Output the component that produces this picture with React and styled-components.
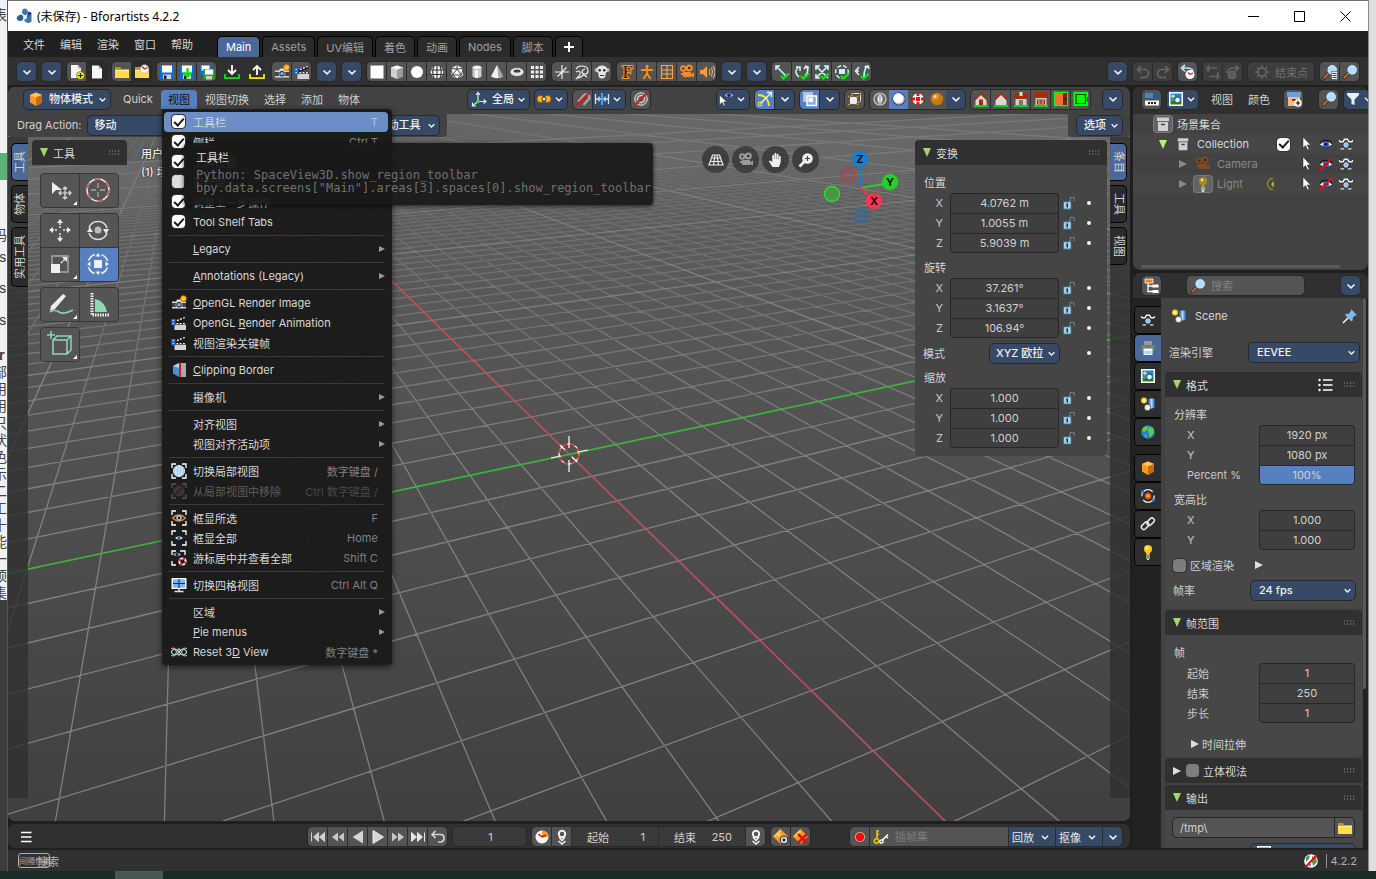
import React, { useState } from 'react'
import styled, { createGlobalStyle, css } from 'styled-components'

const GlobalStyle = createGlobalStyle`
    * {
        box-sizing: border-box;
    }
    body {
        margin: 0;
        background: #1b2b28;
        overflow: hidden;
    }
    body, button, input, select {
        font-family: Inter, "Noto Sans CJK SC", sans-serif;
        font-size: 11px;
        color: #d0d0d0;
    }
    button, input, select {
        margin: 0;
        padding: 0;
        border: 0;
        background: none;
        outline: none;
    }
    button {
        white-space: nowrap;
    }
    svg {
        display: block;
        flex: none;
    }
`

/* ---------- icons, all on a 16 unit grid ---------- */

const eye = (
    <>
        <path d="M1 8.5Q8 2 15 8.5Q8 13.5 1 8.5z" fill="#e8eefc" stroke="#16181f" strokeWidth=".8" />
        <circle cx="8" cy="8.2" r="3" fill="#3a5bd0" />
        <circle cx="8" cy="8.2" r="1.3" fill="#0c1330" />
        <path d="M2 6.5Q8 1.8 14 6.5" fill="none" stroke="#111" />
    </>
)

const corners = <path d="M1 5V1h4M11 1h4v4M15 11v4h-4M5 15H1v-4" fill="none" stroke="#fff" strokeWidth="1.3" />

const cube = (
    <>
        <path d="M8 1.5l6 2.5v7.5L8 15l-6-3.5V4z" fill="#f59a23" />
        <path d="M8 1.5L14 4 8 6.6 2 4z" fill="#ffc45a" />
        <path d="M14 4v7.5L8 15V6.6z" fill="#c86a0a" />
    </>
)

const check = <path d="M7 12l2.5 2.5L15 9.5" fill="none" stroke="#0ce60c" strokeWidth="2.2" />

const house = (door) => (
    <>
        <path d="M2.5 8.5L8 3.5l5.5 5V14h-11z" fill="#d9d9d9" />
        <path d="M8 1L1 8.2l1.3 1.2L8 4l5.7 5.4L15 8.2z" fill="#a32e08" />
        {door && <path d="M6 14V8.5h4V14z" fill="#a32e08" />}
        <path d="M1 15h14" stroke="#0f0" strokeWidth="1.4" />
    </>
)

const lens = (
    <>
        <path d="M6.3 9.7L2.2 13.8" stroke="#3a2418" strokeWidth="3.6" strokeLinecap="round" />
        <path d="M6.5 9.5L2.4 13.6" stroke="#a8694a" strokeWidth="2.2" strokeLinecap="round" />
        <circle cx="10.2" cy="5.8" r="4.4" fill="#b4dcff" stroke="#e8f4ff" strokeWidth="1" />
        <circle cx="10.2" cy="5.8" r="5.1" fill="none" stroke="#4a6c86" strokeWidth=".6" />
    </>
)

const camera = (
    <>
        <path d="M1 6.5h4l1-2h4l1 2h4v7H1z" fill="#d6d6d6" />
        <path d="M1 8h14v4H1z" fill="#444" />
        <circle cx="8" cy="9.8" r="3.4" fill="#d6d6d6" />
        <circle cx="8" cy="9.8" r="2.7" fill="#222" />
        <circle cx="8" cy="9.8" r="1.8" fill="#7db7e8" />
    </>
)

const clapper = (
    <>
        <path d="M3.5 9.5H15V15H3.500z" fill="#d4d4d4" />
        <path d="M4 6l10.500-4.200v2.600L6 7.800h9v1.700H3.500z" fill="#1c1c1c" />
        <path d="M6 5.600l1.800-.7M9 4.400l1.800-.7M12.200 3.100l1.600-.6M5.500 8.600h1.800M8.700 8.600h1.800M12 8.600h1.800" stroke="#fff" strokeWidth="1.300" />
        <path d="M.5 4h4v6.500h-4z" fill="#1a6ee0" />
        <path d="M1.500 5.500h1.500M1.500 8.500h1.500" stroke="#cfe3ff" />
    </>
)

const movieCam = (c) => (
    <>
        <circle cx="4.3" cy="4.5" r="3.2" fill={c} />
        <circle cx="10.3" cy="4" r="3.5" fill={c} />
        <circle cx="4.3" cy="4.5" r="1.1" fill="#2d2018" />
        <circle cx="10.3" cy="4" r="1.2" fill="#2d2018" />
        <path d="M4 8h8v5H4zM12 10l3-1.5v5L12 12zM2 9h2v2H2z" fill={c} />
    </>
)

const disk = (
    <>
        <path d="M1 1h14v14H1z" fill="#0a6fd8" />
        <path d="M3 1.5h10v7H3z" fill="#fff" />
        <path d="M4 10.5h8V15H4z" fill="#d0d0d0" />
        <path d="M5 11.5h2.4V15H5z" fill="#222" />
    </>
)

const folder = (
    <>
        <path d="M1 3h5l1.5 2H15v9H1z" fill="#c79410" />
        <path d="M1 6h14v8H1z" fill="#ffdc4a" />
        <path d="M1 6.4h14" stroke="#fff2a8" />
    </>
)

const render = (
    <>
        <path d="M1.500 5.800h3.500l1.500-2.600h3l1.500 2.600h3.500" fill="none" stroke="#f0f0f0" strokeWidth="1.500" />
        <path d="M1.500 4v1.500M14.500 4v1.500" stroke="#f0f0f0" strokeWidth="1.200" />
        <path d="M4.500 7h7v4.500h-7z" fill="#2a2a2a" />
        <circle cx="8" cy="9" r="2.300" fill="#8cc0ec" stroke="#dfefff" strokeWidth=".7" />
        <path d="M2.500 12.800h3.500M10 12.800h3.500" stroke="#e0e0e0" strokeWidth="1.200" />
    </>
)

const scene = (
    <>
        <path d="M8.5 3l3-1 3 1v8.500l-3 1.500-3-1.500z" fill="#4b8fe0" />
        <path d="M10.500 3h2v9h-2z" fill="#b5d8ff" />
        <circle cx="4" cy="4.500" r="3" fill="#ffd21f" />
        <circle cx="4" cy="4.500" r="1.200" fill="#fff" />
        <circle cx="7.500" cy="11.500" r="3.200" fill="#f0f0f0" stroke="#222" strokeWidth=".6" />
    </>
)

const picture = (
    <>
        <path d="M1 1h14v14H1z" fill="#fff" />
        <path d="M2.500 2.500h11v7h-11z" fill="#1685e8" />
        <path d="M2.500 9.500h11v4h-11z" fill="#22841f" />
        <path d="M3 5.200h4M5 3.200v4" stroke="#ffe14d" strokeWidth="1.300" />
        <circle cx="9.500" cy="9" r="2.800" fill="#f2f2f2" stroke="#111" strokeWidth=".6" />
    </>
)

const bulb = (c) => (
    <>
        <circle cx="8" cy="5" r="4" fill={c} />
        <path d="M6 8h4l-.5 3h-3z" fill={c} />
        <circle cx="7" cy="4" r="1.200" fill="#fff7b8" />
        <path d="M6 12h4M6 14h4M7 15.500h2" stroke="#e8eefc" strokeWidth="1.200" />
    </>
)

const glyphs = {
    down: <path d="M4.500 6.500L8 9.900l3.500-3.400" fill="none" stroke="#f0f0f0" strokeWidth="1.700" />,
    newFile: <><path d="M2 1h7l3 3.500V14H2z" fill="#f4f4f4" /><path d="M9 1v3.500h3" fill="#aaa" /><circle cx="11.500" cy="11.500" r="4" fill="#ecea1b" stroke="#333" strokeWidth=".5" /><path d="M11.500 9v5M9 11.500h5" stroke="#222" strokeWidth="1.200" /></>,
    doc: <><path d="M3 1.500h6.500L13 5v9.500H3z" fill="#f8f8f8" /><path d="M9.500 1.500V5H13" fill="#bbb" /></>,
    folder,
    recent: <>{folder}<circle cx="10.500" cy="5" r="4.300" fill="#fff" stroke="#999" strokeWidth=".6" /><path d="M10.500 5L8 2.500M10.500 5l3-1.500" stroke="#d11" strokeWidth="1.300" /></>,
    disk,
    diskIn: <>{disk}<path d="M8.500 4v8M4.500 8.500l4 4 4-4" fill="none" stroke="#16dc16" strokeWidth="2.400" /></>,
    diskCopy: <><path d="M1 1h11v10H1z" fill="#0a6fd8" /><path d="M2.500 1.500h8v5h-8z" fill="#fff" /><path d="M4.500 5h11v10.500h-11z" fill="#25a825" /><path d="M6 5.500h8v5H6z" fill="#fff" /><path d="M7 12h6v3.500H7z" fill="#ccc" /></>,
    importIcon: <><path d="M8 1v8M4 6l4 4 4-4" fill="none" stroke="#fff" strokeWidth="1.800" /><path d="M1 10v4.200h14V10" fill="none" stroke="#16e016" strokeWidth="1.800" /></>,
    exportIcon: <><path d="M8 11V2.500M4 6l4-4 4 4" fill="none" stroke="#fff" strokeWidth="1.800" /><path d="M1 10v4.200h14V10" fill="none" stroke="#f2ea10" strokeWidth="1.800" /></>,
    shot: <>{camera}<circle cx="12.500" cy="3.500" r="2.800" fill="#ffc21a" stroke="#f07a10" strokeWidth=".8" /></>,
    clapper,
    plane: <path d="M1.500 1.500h13v13h-13z" fill="#fff" />,
    cube: <><path d="M8 1.500l6 2v9L8 15l-6-2.500v-9z" fill="#cfcfcf" /><path d="M8 1.500l6 2-6 2.200-6-2.200z" fill="#f4f4f4" /><path d="M14 3.500v9L8 15V5.700z" fill="#9a9a9a" /></>,
    circle: <circle cx="8" cy="8" r="6" fill="#fff" />,
    sphere: <><circle cx="8" cy="8" r="6.300" fill="#f4f4f4" /><path d="M1 6h14M1 10.500h14M8 1v14M5 2q-2.500 6 0 12M11 2q2.500 6 0 12" fill="none" stroke="#333" strokeWidth="1.100" /></>,
    ico: <><path d="M8 1l6 3.500v7L8 15l-6-3.500v-7z" fill="#f4f4f4" /><path d="M8 1v4L3.500 11h9L8 5M2 4.500L8 5l6-.5M2 11.500h1.500L2 5M14 5l-1.500 6M3.500 11L8 15l4.500-4" fill="none" stroke="#333" strokeWidth=".9" /></>,
    cylinder: <><path d="M3.500 3.500v9q4.500 3 9 0v-9z" fill="#ccc" /><path d="M6 5h3v9H6z" fill="#f2f2f2" /><ellipse cx="8" cy="3.500" rx="4.500" ry="2" fill="#fff" stroke="#888" strokeWidth=".6" /></>,
    cone: <><path d="M8 1L2 12.500q6 3.500 12 0z" fill="#f4f4f4" /><path d="M8 1l1.500 13q3-.3 4.500-1.500z" fill="#a8a8a8" /></>,
    torus: <><ellipse cx="8" cy="8" rx="7" ry="4.500" fill="#e4e4e4" stroke="#333" strokeWidth=".6" /><ellipse cx="8" cy="7" rx="3.500" ry="1.600" fill="#3d3d3d" /></>,
    grid: <path d="M2 2h3v3H2zM6.500 2h3v3h-3zM11 2h3v3h-3zM2 6.500h3v3H2zM6.500 6.500h3v3h-3zM11 6.500h3v3h-3zM2 11h3v3H2zM6.500 11h3v3h-3zM11 11h3v3h-3z" fill="#f0f0f0" />,
    empty: <path d="M8 1v14M1 8h14M3.500 12.500l9-9" stroke="#eee" strokeWidth="1.200" />,
    curve: <path d="M2 5q2-3 5-3t5 1 2 4-3 3-3-2 3-3M2 8q3-2 4 0t-2 5-1 1q3 0 5-2t5 1" fill="none" stroke="#eee" strokeWidth="1.200" />,
    monkey: <><circle cx="2.500" cy="6" r="2" fill="#bbb" /><circle cx="13.500" cy="6" r="2" fill="#bbb" /><path d="M8 1.500q6 0 5 6-1 1-1.500 2 .5 5-3.500 5t-3.500-5Q4 8.500 3 7.500 2 1.500 8 1.500z" fill="#e8e8e8" /><circle cx="5.700" cy="6.300" r="1.200" fill="#222" /><circle cx="10.300" cy="6.300" r="1.200" fill="#222" /><path d="M6 11.500h4" stroke="#333" /></>,
    fontF: <path d="M3 1.500h11V5h-1.500L12 3H8v4h3V5.500h1V10h-1V8.500H8V13h2v1.500H3V13h2V3H3z" fill="#3d1c06" stroke="#ff9a35" />,
    armature: <><circle cx="8" cy="2.500" r="1.700" fill="#ff8c1e" /><path d="M2 6h12M8 4v6M8 9.500L4.500 15M8 9.500l3.500 5.500" fill="none" stroke="#ff8c1e" strokeWidth="1.800" /></>,
    lattice: <path d="M2.500 1.500h11v13h-11zM8 1.500v13M2.500 6h11M2.500 10h11" fill="none" stroke="#ffa245" strokeWidth="1.200" />,
    movie: movieCam('#f08a30'),
    speaker: <><path d="M1 6h3l4-4v12l-4-4H1z" fill="#ff9a3d" /><path d="M10 5q2 3 0 6M12 3.500q3 4.500 0 9M14 2q4 6 0 12" fill="none" stroke="#e0b088" strokeWidth="1.100" /></>,
    applyMove: <><path d="M2 2l10 10M2 6V2h4" fill="none" stroke="#c9f7f7" strokeWidth="1.600" />{check}</>,
    applyRot: <><path d="M5 13Q-1 8 4.500 3M11 12q5-5 1-10M2 3h4v4M10 5l2-3 3 2" fill="none" stroke="#c9f7f7" strokeWidth="1.600" />{check}</>,
    applyScale: <><path d="M2 2l12 12M14 2L2 14M2 6V2h4M10 2h4v4M2 10v4h4" fill="none" stroke="#c9f7f7" strokeWidth="1.600" />{check}</>,
    applyAll: <><circle cx="8" cy="8" r="6.300" fill="none" stroke="#c9f7f7" strokeWidth="1.400" strokeDasharray="4 2" /><path d="M5 5h6v5H5z" fill="#c9f7f7" />{check}</>,
    applyDelta: <><path d="M5 3L1.500 7 5 11M1.500 7H5M14 2q-4 2-4 11M10.500 3L14 2l1 3" fill="none" stroke="#c9f7f7" strokeWidth="1.600" />{check}</>,
    undo: <path d="M6 2L2.500 5.500 6 9M3 5.500h6.500a4 4 0 010 8H5" fill="none" stroke="#666" strokeWidth="1.700" />,
    redo: <path d="M10 2l3.500 3.500L10 9M13 5.500H6.500a4 4 0 000 8H11" fill="none" stroke="#666" strokeWidth="1.700" />,
    history: <><path d="M5 1L1.500 4 5 7.500M2 4h5q5 0 6 3" fill="none" stroke="#bfe2ff" strokeWidth="1.700" /><circle cx="10" cy="10.500" r="4.500" fill="#fff" /><path d="M10 10.500L8 8.500M10 10.500l3-1.500" stroke="#d11" strokeWidth="1.200" /></>,
    repeat: <path d="M3 8V4h9M4.500 1.500L2 4l2.500 2.500M13 8v4.500H4M11.500 10l2.500 2.500-2.500 2.500" fill="none" stroke="#636363" strokeWidth="1.600" />,
    repeatHist: <><path d="M10 1l3.500 3L10 7.500M13 4H8Q3 4 2 9" fill="none" stroke="#666" strokeWidth="1.600" /><circle cx="7" cy="11" r="4" fill="#5c5c5c" stroke="#6c6c6c" /></>,
    gear: <><circle cx="8" cy="8" r="4" fill="none" stroke="#666" strokeWidth="1.600" /><path d="M8 1v3M8 12v3M1 8h3M12 8h3M3 3l2 2M11 11l2 2M13 3l-2 2M5 11l-2 2" stroke="#666" strokeWidth="1.500" /></>,
    search: lens,
    searchDoc: <>{lens}<path d="M9.500 7.500h6v8h-6z" fill="#eee" stroke="#333" strokeWidth=".5" /><path d="M10.500 9.500h4M10.500 11.500h4M10.500 13.500h4" stroke="#444" /></>,
    objectMode: cube,
    axes: <><path d="M7 10.500V2M7 10.500h8M7 10.500L2 14.500M5 4l2-2.500L9 4M12.500 8.500l2.500 2-2.500 2M1.500 11.500v3.500H5" fill="none" stroke="#e8e8e8" strokeWidth="1.200" /><circle cx="7" cy="10.500" r="1.800" fill="#2ee52e" /></>,
    pivot: <><circle cx="4.500" cy="8" r="3.500" fill="#ffb01f" stroke="#7a4c00" strokeWidth=".6" /><circle cx="11.500" cy="8" r="3.500" fill="#ffb01f" stroke="#7a4c00" strokeWidth=".6" /><circle cx="8" cy="8" r="2" fill="#fff" stroke="#222" /></>,
    magnet: <><path d="M3 11L8.500 4.500q3-2.500 5 0t-.5 4.500L8.500 14" fill="none" stroke="#a4a4a4" strokeWidth="2.400" /><path d="M2 14L14 2" stroke="#e01010" strokeWidth="1.800" /></>,
    snap: <><path d="M1.500 3v10M14.500 3v10M2 8h12M5 5.500v5M11 5.500v5" stroke="#cfe2f6" strokeWidth="1.300" /><path d="M8 2v12" stroke="#39a0ff" strokeWidth="2.200" /></>,
    prop: <><circle cx="8" cy="8" r="6.300" fill="#777" stroke="#ddd" /><circle cx="8" cy="8" r="3.500" fill="#666" stroke="#eee" /><path d="M2.500 13.500L13.500 2.500" stroke="#e01010" strokeWidth="1.800" /></>,
    selectable: <><path d="M1.500 4v10l2.500-2.500 1.800 3.500 1.500-.8L5.600 11H9z" fill="#f4f4f4" stroke="#222" strokeWidth=".5" /><path d="M6.500 4.500Q11 0 15.500 4.500 11 8 6.500 4.500z" fill="#8ea6ff" /><circle cx="11" cy="4.300" r="1.700" fill="#17216b" /></>,
    gizmo: <><path d="M1 4q10 0 11 11" fill="none" stroke="#f2ea10" strokeWidth="1.900" /><path d="M3.500 12.500L14 2M10 1.500h4.500V6" fill="none" stroke="#e8f6ff" strokeWidth="1.300" /><circle cx="3" cy="13" r="1.800" fill="none" stroke="#f2ea10" strokeWidth="1.200" /></>,
    overlay: <><path d="M1 1h10v10H1z" fill="#b9c4d4" /><path d="M5 5h9.500v9.500H5z" fill="#8daee0" stroke="#fff" strokeWidth="1.400" /><path d="M6.500 6.500H11V11H6.500z" fill="#fff" /></>,
    xray: <><path d="M5 2.500h8.500V11H5z" fill="none" stroke="#ddd" /><path d="M2.500 5.500h8v8h-8z" fill="#ececec" stroke="#333" strokeWidth=".6" /><path d="M1 4.500h2v2H1zM9.500 4.500h2v2h-2zM1 12.500h2v2H1zM9.500 12.500h2v2h-2zM4 1.500h2v2H4zM12.500 1.500h2v2h-2zM12.500 10h2v2h-2z" fill="#e8b13a" stroke="#3a2a08" strokeWidth=".4" /></>,
    wire: <><circle cx="8" cy="8" r="6" fill="#666" stroke="#ccc" strokeWidth="1.200" /><path d="M8 2.500Q3.500 8 8 13.500Q12.500 8 8 2.500z" fill="#f0f0f0" stroke="#ddd" /><path d="M8 2v12" stroke="#777" strokeWidth=".8" /></>,
    solid: <><circle cx="8" cy="8" r="6.500" fill="#1c2a44" /><circle cx="8" cy="8" r="5.800" fill="#b9b9b9" /><circle cx="7.300" cy="7.300" r="5" fill="#fff" /></>,
    material: <><circle cx="8" cy="8" r="6" fill="#f4f4f4" stroke="#333" strokeWidth=".6" /><path d="M6.500 2h3v3h-3zM2 6.500h3v3H2zM11 6.500h3v3h-3zM6.500 11h3v3h-3zM6 6h4v4H6z" fill="#e01818" /></>,
    rendered: <><circle cx="8" cy="8" r="6.200" fill="#c67a10" /><circle cx="6.500" cy="6" r="3" fill="#e09a30" /><circle cx="6" cy="5.500" r="1.300" fill="#fbe0a0" /></>,
    house1: house(true),
    house2: house(false),
    house3: <><path d="M2.500 8h11v6h-11z" fill="#cfcfcf" /><path d="M1 2h14v6H1z" fill="#a32e08" /><path d="M6.500 1h3v4h-3z" fill="#ddd" /><path d="M6 9h4v5H6z" fill="#777" /><path d="M1 15h14" stroke="#0f0" strokeWidth="1.400" /></>,
    house4: <><path d="M2.500 7h11v7h-11z" fill="#cfcfcf" /><path d="M1 1h14v6H1z" fill="#a32e08" /><path d="M4.500 9h7v4h-7zM8 9v4M4.500 11h7" fill="none" stroke="#a32e08" strokeWidth="1.200" /><path d="M1 15h14" stroke="#0f0" strokeWidth="1.400" /></>,
    house5: <><path d="M1.500 1.500h13v13h-13z" fill="#ff6a35" stroke="#0f0" strokeWidth="1.300" /><path d="M10 2h4v12h-4z" fill="#7d2606" /><path d="M11.500 8H13" stroke="#111" strokeWidth="1.500" /></>,
    house6: <><path d="M.5 1h14.500v14H.5z" fill="#0f0" /><path d="M3 3.500h9.500v9H3z" fill="none" stroke="#0a3a0a" strokeWidth="1.200" /><path d="M14.300 6.500v4" stroke="#0a3a0a" /></>,
    toggles: <><path d="M1 2h14v5H1z" fill="#3b8ad6" /><path d="M9 2h6v5H9z" fill="#1b5fa8" /><path d="M1 9.500h14v5H1z" fill="#f4f4f4" /><path d="M4 12h2M7 12h2M10 12h2" stroke="#222" strokeWidth="2" /></>,
    picture,
    newColl: <><path d="M1 1h14v5H1z" fill="#6a9fd6" /><path d="M2 6h12v9H2z" fill="#f5b98a" /><path d="M6 8h4v2H6z" fill="#704020" /><circle cx="12" cy="12" r="3.800" fill="#fff" /><path d="M12 9.700v4.600M9.700 12h4.600" stroke="#111" strokeWidth="1.200" /></>,
    filter: <path d="M2 2h12v2L9.500 8.500V14l-3-1V8.500L2 4z" fill="#e6eefa" />,
    coll: <><path d="M2 1.500h12v3.500H2z" fill="#d0d0d0" /><path d="M3 6h10v9H3z" fill="#d0d0d0" /><path d="M6 8.500h4" stroke="#444" strokeWidth="1.600" /></>,
    camObj: movieCam('#7b4a26'),
    light: bulb('#a08e24'),
    pointer: <path d="M5 1v11l2.500-2.500L9.500 14l1.700-.8-2-4.200h3.300z" fill="#fff" stroke="#222" strokeWidth=".5" />,
    eye,
    eyeOff: <>{eye}<path d="M2 14L14 2" stroke="#e01010" strokeWidth="1.800" /></>,
    render,
    tree: <><path d="M1 1h8v4H1z" fill="#ff7a1a" stroke="#fff" strokeWidth=".8" /><path d="M4 5v8.500h5M4 8h5" fill="none" stroke="#fff" strokeWidth="1.300" /><path d="M8.500 6.500h6v3h-6zM8.500 12h6v3h-6z" fill="#fff" /></>,
    scene,
    pin: <><path d="M9 1l6 6-2 .5-2.500 2.500.5 2-1.500 1.500-6.500-6.500L4.500 5.500l2 .5L9 3z" fill="#7bb8f0" /><path d="M6 10L1 15" stroke="#fff" strokeWidth="1.500" /></>,
    printer: <><path d="M4 1h8v4H4z" fill="#9a9a9a" /><path d="M1 5h14v6H1z" fill="#777" /><path d="M11 6.500h2" stroke="#2fd32f" strokeWidth="1.500" /><path d="M3.500 8.500h9V15h-9z" fill="#eef5ff" /><path d="M4.500 11h7v3h-7z" fill="#a9d2ff" /></>,
    world: <><circle cx="8" cy="8" r="6.800" fill="#1b86d8" /><path d="M3 4q3-3 5-1.500L7 6l-3 2-2-1zM9 3l4 1 1 4-3 5-2-1V9L7.500 7zM4 10l3 2-1 2z" fill="#6ac83a" /></>,
    physics: <><circle cx="8" cy="8" r="6.300" fill="none" stroke="#e8e8e8" strokeWidth="1.300" strokeDasharray="15 4" /><circle cx="8" cy="8" r="3.200" fill="#e8590c" /><circle cx="8" cy="8" r="1.400" fill="#ffc04a" /><circle cx="2.500" cy="3.500" r="1.600" fill="#2a74ff" /><circle cx="13.500" cy="12.500" r="1.400" fill="#2a74ff" /></>,
    link: <g fill="none" stroke="#e8e8e8" strokeWidth="1.500"><rect x="1" y="7.500" width="8.500" height="4.800" rx="2.400" transform="rotate(-45 5 10)" /><rect x="6.500" y="3.500" width="8.500" height="4.800" rx="2.400" transform="rotate(-45 10.500 6)" /></g>,
    bulb: bulb('#ffc81e'),
    list: <><path d="M6 3h9.500M6 8h9.500M6 13h9.500" stroke="#fff" strokeWidth="1.400" /><circle cx="2.500" cy="3" r="1.200" fill="#fff" /><circle cx="2.500" cy="8" r="1.200" fill="#fff" /><circle cx="2.500" cy="13" r="1.200" fill="#fff" /></>,
    lock: <><path d="M1.500 6.500h9V15h-9z" fill="#a4d0e6" stroke="#2c5e78" strokeWidth="1" /><path d="M6 8.500v4.500M4.800 9.300H6" stroke="#16303f" strokeWidth="1.600" /><path d="M9 6.500V4Q9 1.500 11.500 1.500T14 4v1.500" fill="none" stroke="#7aa9c0" strokeWidth="1.200" strokeDasharray="2.500 1" /></>,
    clipping: <><path d="M8 1v14l-6-3.500V4z" fill="#4b8fcf" /><path d="M8 1v5L2 4z" fill="#a8d4ff" /><path d="M10 1h5v14h-5z" fill="#a8a8a8" /><path d="M9 1v14" stroke="#f01818" strokeWidth="1.800" /></>,
    local: <>{corners}<circle cx="8" cy="8" r="5.600" fill="#a4cdf2" stroke="#e8f4ff" strokeWidth=".8" /><path d="M8 2.500v11M5.500 4q-1.500 4 0 8M10.500 4q1.500 4 0 8" fill="none" stroke="#dff0ff" strokeWidth="1" /></>,
    localOff: <g opacity=".25">{corners}<circle cx="8" cy="8" r="5.600" fill="#8093a6" /><path d="M3 13L13 3" stroke="#e01010" strokeWidth="1.800" /></g>,
    frameSel: <>{corners}<path d="M1.500 8Q8 2 14.500 8 8 14 1.500 8z" fill="none" stroke="#f08a30" strokeWidth="1.300" /><circle cx="8" cy="8" r="2.800" fill="#9cc4e8" /><circle cx="8" cy="8" r="1.200" fill="#112" /></>,
    frameAll: <>{corners}<path d="M4 8q4-3.500 8 0-4 3-8 0z" fill="#cfe4ff" /><circle cx="8" cy="8" r="1.400" fill="#25539a" /></>,
    frameCur: <><path d="M1 5V1h4M9 1h5v4M1 11v4h4" fill="none" stroke="#fff" strokeWidth="1.300" /><path d="M2 4.500Q6 1 10 4.500 6 8 2 4.500z" fill="#9cc4e8" /><circle cx="6" cy="4.500" r="1.500" fill="#124" /><circle cx="11.500" cy="11.500" r="3.200" fill="none" stroke="#fff" strokeWidth="1.800" /><circle cx="11.500" cy="11.500" r="3.200" fill="none" stroke="#e01010" strokeWidth="1.800" strokeDasharray="2.500 2.500" /></>,
    quad: <><path d="M.5 1h15v11H.5z" fill="#f4f4f4" /><path d="M2 2.300h12v8.400H2z" fill="#78b4f5" /><path d="M8 2v9M2 6.500h12" stroke="#10305a" strokeWidth="1.100" /><path d="M3.500 14.500h9M8 12v2" stroke="#e0e0e0" strokeWidth="1.500" /></>,
    reset: <><path d="M0 4.500l3-.5 5 7.500L13 4l3 .5M0 11.500l3 .5 5-7.500 5 7.500 3-.5" fill="none" stroke="#cfa6d8" strokeWidth="1.100" /><path d="M0 8q4-6 8 0t8 0M0 8q4 6 8 0t8 0" fill="none" stroke="#a8ecbf" strokeWidth="1.200" /></>,
    menu: <path d="M3 3.500h10.500M3 8h10.500M3 12.500h10.500" stroke="#fff" strokeWidth="1.400" />,
    first: <path d="M1.500 3.500v9M8.500 3.500v9L3.500 8zM14.500 3.500v9L9.500 8z" fill="#d0d0d0" stroke="#d0d0d0" />,
    rewind: <path d="M8 3.500v9L2 8zM14 3.500v9L8.500 8z" fill="#c8c8c8" />,
    back: <path d="M13 1.500v13L2.500 8z" fill="#d4d4d4" />,
    play: <path d="M3 1.500v13L13.500 8z" fill="#d4d4d4" stroke="#fff" strokeWidth=".8" />,
    forward: <path d="M2 3.500v9L7.500 8zM8 3.500v9L14 8z" fill="#c8c8c8" />,
    last: <path d="M14.500 3.500v9M1.500 3.500v9L6.500 8zM7.500 3.500v9l5-4.500z" fill="#e4e4e4" stroke="#e4e4e4" />,
    loop: <path d="M5.500 2L2 5.500 5.500 9M2.500 5.500H11q3 0 3 3.500t-3 4H8" fill="none" stroke="#d0d0d0" strokeWidth="1.700" />,
    clock: <><circle cx="8" cy="8" r="6.500" fill="#fff" /><path d="M8 8V1.500A6.500 6.500 0 0114.500 8z" fill="#ff9a2e" /><path d="M8 8L4.500 5M8 8l4-2" stroke="#d11" strokeWidth="1.600" /></>,
    marker: <><circle cx="8" cy="5" r="3.200" fill="none" stroke="#f0f0f0" strokeWidth="2" /><path d="M5 8l3 3.500L11 8M4.500 12L8 15l3.500-3" fill="none" stroke="#f0f0f0" strokeWidth="1.500" /></>,
    keyAdd: <><path d="M7.500 0L15 7.500 7.500 15 0 7.500z" fill="#f59a23" /><path d="M7.500 0v7.500H0z" fill="#ffc45a" /><circle cx="11" cy="11" r="3.800" fill="#fff" stroke="#222" /><path d="M11 9v4M9 11h4" stroke="#111" strokeWidth="1.200" /></>,
    keyDel: <><path d="M7.500 0L15 7.500 7.500 15 0 7.500z" fill="#f59a23" /><path d="M7.500 0v7.500H0z" fill="#ffc45a" /><path d="M5 5l9 9M14 5l-9 9" stroke="#e01010" strokeWidth="2.600" /></>,
    record: <><circle cx="8" cy="8" r="5" fill="#e8b0b0" /><circle cx="8" cy="8" r="4.200" fill="#f00a0a" /></>,
    keys: <><path d="M4 1v9M4 2h2M4 5h2" stroke="#e8c224" strokeWidth="1.600" /><circle cx="3.500" cy="12" r="2.200" fill="none" stroke="#e8c224" strokeWidth="1.500" /><path d="M9.500 11L15 5.500M13 7.500l2 1.500" stroke="#fff" strokeWidth="1.500" /><circle cx="8.500" cy="12.500" r="1.700" fill="none" stroke="#fff" strokeWidth="1.300" /></>,
    globe: <><circle cx="8" cy="8" r="6.800" fill="#fff" /><path d="M3 4l4-2-1 4-3 3zM9 3l4 2 1 4-4 4-1-4z" fill="#4a9c4a" /><path d="M5 10l3 1-1 3z" fill="#2b77d0" /><path d="M2.500 14L14 2" stroke="#e01010" strokeWidth="2" /></>,
    logo: <><path d="M8 .5q4 0 4 3.500 0 2-2.500 3.500Q6 6.500 6 3.500 6 1.500 8 .5z" fill="#3f78ae" /><path d="M.5 10.500Q1.500 7 5 6.500l3 2q-.5 4.500-4 4.500-2.500 0-3.500-2.500z" fill="#2b5f98" /><path d="M15.500 5v8.500Q13 16 9.500 14q-1.500-1-1-3.500 3.500-.5 7-5.500z" fill="#3f78ae" /><path d="M12 4q3.500-1 3.500 2l-5 4.500z" fill="#1c4878" /><circle cx="9" cy="9.300" r="1.900" fill="#eef5ff" /></>,
    persp: <path d="M4.500 3h7L15 13H1zM3.500 6h9M2.500 9.500h11M7 3l-1.500 10M9 3l1.500 10" fill="none" stroke="#e8e8e8" strokeWidth="1.200" />,
    navCam: movieCam('#9a9a9a'),
    hand: <path d="M4.500 15L1 9.500q.5-1.500 2-.5l1.200 1.300V3.500q.9-1.300 1.800 0V7h.4V1.500q.9-1.300 1.900 0V7h.4V2.300q.9-1.300 1.800 0V7.500h.4V4.300q.9-1 1.800 0V10L11 15z" fill="#eee" />,
    navZoom: <><circle cx="9.500" cy="6.500" r="5.300" fill="#eee" /><path d="M6 10L1.500 14.500" stroke="#eee" strokeWidth="2.600" /><path d="M9.500 4v5M7 6.500h5" stroke="#444" strokeWidth="1.200" /></>,
}

const Icon = ({ name, size = 16 }) => (
    <svg width={size} height={size} viewBox="0 0 16 16" aria-hidden="true">{glyphs[name]}</svg>
)

const toolGlyphs = {
    select: <><path d="M11 8v12l4-4h6z" fill="#eee" /><path d="M24 13v12M18 19h12M22 15l2-2 2 2M22 23l2 2 2-2M20 17l-2 2 2 2M28 17l2 2-2 2" fill="none" stroke="#e0e0e0" strokeWidth="1.200" /></>,
    cursor: <><circle cx="18" cy="16" r="11" fill="none" stroke="#f0e4e4" strokeWidth="1.500" /><circle cx="18" cy="16" r="11" fill="none" stroke="#d05858" strokeWidth="1.500" strokeDasharray="6 6" /><path d="M18 9v5M18 18v5M11 16h5M20 16h5" stroke="#a8a8a8" strokeWidth="1.300" /></>,
    move: <><path d="M19 9v5M19 19v5M11 16h5M22 16h5" stroke="#e8e8e8" strokeWidth="1.500" strokeDasharray="2 1" /><path d="M19 5l3 4h-6zM19 28l3-4h-6zM8 16l4-3v6zM30 16l-4-3v6z" fill="#e8e8e8" /></>,
    rotate: <><path d="M9 14a9.500 9.500 0 0118 0M27 19a9.500 9.500 0 01-18 0" fill="none" stroke="#e0e0e0" strokeWidth="1.500" /><circle cx="18" cy="16" r="3.500" fill="#bbb" /><path d="M7 18h6l-3-5zM29 15h-6l3 5z" fill="#e8e8e8" /></>,
    scale: <><path d="M11 8h16v16H11z" fill="none" stroke="#aaa" strokeWidth="1.400" /><path d="M10 16h9v9h-9z" fill="#f0f0f0" /><path d="M20 15l4-4" stroke="#eee" strokeWidth="1.500" strokeDasharray="2 1" /><path d="M26 9v5l-5-5z" fill="#eee" /></>,
    transform: <><circle cx="18" cy="16" r="10" fill="none" stroke="#f4f4f4" strokeWidth="1.500" strokeDasharray="9 6.700" strokeDashoffset="-3.300" /><path d="M14 12h8v8h-8z" fill="#f0f0f0" /><path d="M18 5l2.500 3.500h-5zM18 27l2.500-3.500h-5zM7 16l3.500-2.500v5zM29 16l-3.500-2.500v5z" fill="#f4f4f4" /></>,
    annotate: <><path d="M22 6l3 2-11 13-5 2 1-5z" fill="#eee" /><path d="M9 24q5-3 9 0t14-2" fill="none" stroke="#8fd0ae" strokeWidth="1.700" /></>,
    measure: <><path d="M12 5v22h17" fill="none" stroke="#eee" strokeWidth="3" strokeDasharray="1.500 1" /><path d="M15 24V11q10 2 12 13z" fill="#8fd8b4" /></>,
    addCube: <path d="M12 12l4-4h14v14l-4 4H12zM12 12h14v14M26 12l4-4M6 7h8M10 3v8" fill="none" stroke="#8fd8b4" strokeWidth="1.500" />,
}

/* ---------- desktop and window ---------- */

const Desktop = styled.div`
    display: flex;
    flex-direction: column;
    height: 100vh;
`

const Stage = styled.div`
    display: flex;
    flex: 1;
    min-height: 0;
`

const Taskbar = styled.div`
    height: 8px;
    padding-left: 115px;
    background: #1b2b28;

    &::before {
        content: '';
        display: block;
        width: 48px;
        height: 8px;
        background: #4a5854;
    }
`

const EdgeLeft = styled.div`
    display: flex;
    flex-direction: column;
    align-items: flex-end;
    width: 8px;
    overflow: hidden;
    background: linear-gradient(#f1f1f1 600px, #3c3c3c 600px);
    color: #444;
    font-size: 14px;
    line-height: 17px;
    border-right: 1px solid #555;
`

const EdgeLine = styled.span`
    flex: none;
    white-space: nowrap;
    margin-top: ${p => p.$gap || 0}px;
    font-weight: ${p => p.$bold ? 700 : 400};
    min-width: 8px;
    min-height: ${p => p.$bg ? 27 : 17}px;
    background: ${p => p.$bg || 'none'};
`

const EdgeRight = styled.div`
    width: 8px;
    background: #dedede;
    border-left: 1px solid #8a8a8a;
`

const Window = styled.div`
    display: flex;
    flex-direction: column;
    flex: 1;
    min-width: 0;
    background: #1f1f1f;
    border-top: 1px solid #707070;
`

const TitleBar = styled.header`
    display: flex;
    align-items: center;
    gap: 5px;
    height: 30px;
    padding-left: 8px;
    background: #fff;
    color: #000;
    font: 12px "Noto Sans", "Noto Sans CJK SC", sans-serif;
`

const WindowButtons = styled.div`
    display: flex;
    margin-left: auto;

    button {
        width: 46px;
        height: 28px;
        display: grid;
        place-items: center;
    }
`

const MenuBar = styled.nav`
    display: flex;
    align-items: flex-end;
    height: 26px;
    padding-left: 8px;
    background: #202020;
`

const MenuBarItem = styled.button`
    height: 26px;
    padding: 0 7px;
    margin-right: 1px;
    color: #d8d8d8;
`

const WorkTabs = styled.div`
    display: flex;
    gap: 2px;
    margin-left: 16px;
`

const WorkTab = styled.button`
    height: 21px;
    padding: 0 8px;
    border: 1px solid #000;
    border-bottom: 0;
    border-radius: 5px 5px 0 0;
    color: ${p => p.$active ? '#fff' : '#a0a0a0'};
    background: ${p => p.$active ? '#4b6998' : '#2b2b2b'};
`

const Bar = styled.div`
    display: flex;
    align-items: center;
    gap: 6px;
    flex: none;
    height: ${p => p.$h || 26}px;
    padding: ${p => p.$pad || '0 8px'};
    background: ${p => p.$bg || '#303030'};
`

const Group = styled.div`
    display: flex;
    flex: none;
    gap: ${p => p.$tight ? 0 : 1}px;
    height: 19px;
    border-radius: 4px;
    overflow: hidden;
    background: ${p => p.$flat ? 'none' : '#2c2c2c'};
    outline: ${p => p.$flat ? 'none' : '1px solid #292929'};
    margin-left: ${p => p.$push ? 'auto' : '0'};
`

const tones = {
    grey: '#545454',
    flat: 'transparent',
    blue: '#364a68',
    active: '#5680c2',
    dim: '#3d3d3d',
}

const ToolButton = styled.button`
    display: flex;
    align-items: center;
    justify-content: center;
    flex: none;
    gap: ${p => p.$gap || 0}px;
    min-width: 19px;
    width: ${p => p.$w ? p.$w + 'px' : 'auto'};
    height: 19px;
    background: ${p => tones[p.$tone || 'grey']};
    color: ${p => p.$tone === 'dim' ? '#707070' : '#e6e6e6'};
`

const Tool = ({ icon, tone, label, w, gap, chevron, children }) => (
    <ToolButton $tone={tone} $w={w} $gap={gap} aria-label={children ? undefined : label || icon}>
        {icon && <Icon name={icon} />}
        {children}
        {chevron && <Icon name="down" size={14} />}
    </ToolButton>
)

const Drop = () => (
    <Tool icon="down" tone="blue" label="More" />
)

const Tools = ({ icons, tone, flat, push }) => (
    <Group $flat={flat} $push={push}>
        {icons.map((name) => <Tool key={name} icon={name} tone={flat ? 'flat' : tone} />)}
    </Group>
)

const Picker = styled.span`
    display: flex;
    align-items: center;
    flex: none;
    width: ${p => p.$w}px;
    height: 19px;
    padding: 0 1px 0 ${p => p.$pad || 5}px;
    border-radius: 4px;
    outline: 1px solid #292929;
    background: #364a68;

    select {
        flex: 1;
        min-width: 0;
        appearance: none;
        color: #f0f0f0;
        text-overflow: clip;
        font-weight: 500;
    }
    svg + select {
        margin-left: 5px;
    }
    svg:last-child {
        pointer-events: none;
    }
`

const Select = ({ label, value, icon, w, pad }) => (
    <Picker $w={w} $pad={pad}>
        {icon && <Icon name={icon} />}
        <select aria-label={label} defaultValue={value}>
            <option>{value}</option>
        </select>
        <Icon name="down" size={13} />
    </Picker>
)

/* ---------- editors ---------- */

const Editors = styled.main`
    display: flex;
    flex: 1;
    gap: 3px;
    min-height: 0;
    padding-top: 2px;
    padding-bottom: 2px;
`

const Column = styled.div`
    display: flex;
    flex-direction: column;
    gap: 3px;
    min-height: 0;
    min-width: 0;
    flex: ${p => p.$w ? `0 0 ${p.$w}px` : 1};
`

const Area = styled.section`
    display: flex;
    flex-direction: column;
    flex: ${p => p.$h ? `0 0 ${p.$h}px` : 1};
    min-height: 0;
    position: relative;
    overflow: hidden;
    border-radius: 7px;
    background: ${p => p.$bg || '#424242'};
`

const HeaderMenu = styled.button`
    height: 19px;
    padding: 0 7px;
    margin-right: 1px;
    border-radius: 4px 4px 0 0;
    background: ${p => p.$active ? '#5680c2' : 'none'};
    color: ${p => p.$active ? '#101010' : '#d0d0d0'};
`

const HeaderMenus = styled.div`
    display: flex;
    flex: none;
`

const MenuAnchor = styled.div`
    position: relative;
`

const Gap = styled.span`
    flex: none;
    width: ${p => p.$w || 0}px;
    margin-left: ${p => p.$push ? 'auto' : '0'};
`

const Viewport = styled.div`
    position: relative;
    display: flex;
    flex-direction: column;
    flex: 1;
    min-height: 0;
`

const SceneLayer = styled.svg`
    position: absolute;
    inset: 0;
    width: 100%;
    height: 100%;
`

const ToolHeader = styled.div`
    position: relative;
    display: flex;
    justify-content: space-between;
    height: 23px;
`

const ToolSettings = styled.div`
    display: flex;
    align-items: center;
    gap: 6px;
    padding: 0 8px 1px 9px;
    background: #424242;
    border-radius: 0 0 4px 4px;
`

const ViewBody = styled.div`
    position: relative;
    display: flex;
    align-items: flex-start;
    flex: 1;
    min-height: 0;
    padding-bottom: 23px;
`

const SideTabs = styled.div`
    display: flex;
    flex-direction: column;
    align-self: stretch;
    align-items: ${p => p.$right ? 'flex-start' : 'flex-end'};
    gap: 4px;
    width: 20px;
    padding-top: 6px;
    background: rgba(48, 48, 48, 0.8);
`

const SideTab = styled.button`
    width: 17px;
    min-height: 38px;
    padding: 7px 0;
    writing-mode: vertical-rl;
    text-orientation: sideways;
    line-height: 15px;
    border: 1px solid #050505;
    border-left: 0;
    border-radius: 0 5px 5px 0;
    color: #d8d8d8;
    background: ${p => p.$active ? '#4b6998' : '#2b2b2b'};
    transform: ${p => p.$flip ? 'rotate(180deg)' : 'none'};
`

const ToolShelf = styled.aside`
    width: 95px;
    margin: 3px 0 0 4px;
`

const PanelHeader = styled.div`
    display: flex;
    align-items: center;
    gap: 5px;
    height: 25px;
    padding: 0 7px 0 8px;
    border-radius: 4px 4px 0 0;
    background: #303030;
    color: #d8d8d8;
`

const Triangle = styled.span`
    width: 0;
    height: 0;
    border: 4px solid transparent;
    ${p => p.$closed
        ? css`border-width: 4px 0 4px 8px; border-left-color: ${p.$color || '#e0e0e0'};`
        : css`border-width: 9px 4px 0 4px; border-top-color: ${p.$color || '#a6d46e'};`}
`

const GripDots = styled.svg`
    margin-left: auto;
`

const Grip = () => (
    <GripDots width="11" height="5" viewBox="0 0 11 5" aria-hidden="true">
        <path d="M0 1h1.200M3 1h1.200M6 1h1.200M9 1h1.200M0 4h1.200M3 4h1.200M6 4h1.200M9 4h1.200" stroke="#8c8c8c" strokeWidth="1.200" />
    </GripDots>
)

const ShelfGroup = styled.div`
    display: grid;
    grid-template-columns: repeat(${p => p.$cols || 2}, 38px);
    gap: 1px;
    width: max-content;
    margin: ${p => p.$first ? 8 : 5}px 0 0 8px;
    border: 1px solid #383838;
    border-radius: 4px;
    overflow: hidden;
    background: #383838;
`

const ShelfButton = styled.button`
    height: 33px;
    background: ${p => p.$active ? '#5680c2' : '#555'};
`

const ViewInfo = styled.div`
    margin: 8px 0 0 14px;
    color: #f0f0f0;
    font-weight: 500;
    line-height: 18px;
    text-shadow: 0 0 2px #000;
`

const NavButtons = styled.div`
    display: flex;
    gap: 3px;
    margin: 9px 0 0 auto;
`

const NavButton = styled.button`
    display: grid;
    place-items: center;
    width: 27px;
    height: 27px;
    border-radius: 50%;
    background: rgba(50, 50, 50, 0.75);
`

const NPanel = styled.aside`
    width: 192px;
    margin: 3px 3px 0 12px;
    padding-bottom: 8px;
    border-radius: 4px;
    background: #454545;
`

const GroupTitle = styled.div`
    height: 20px;
    line-height: 20px;
    margin-top: ${p => p.$top || 5}px;
    padding-left: 9px;
    color: #d4d4d4;
`

const FieldRow = styled.div`
    display: grid;
    grid-template-columns: ${p => p.$cols};
    align-items: center;
    height: 20px;

    &:first-child input {
        border-radius: 4px 4px 0 0;
    }
    &:last-child input {
        border-bottom: 1px solid #272727;
        border-radius: 0 0 4px 4px;
    }
`

const FieldName = styled.label`
    padding: ${p => p.$right ? '0 7px 0 0' : '0 0 0 22px'};
    text-align: ${p => p.$right ? 'right' : 'left'};
    color: #c8c8c8;
`

const Field = styled.input`
    min-width: 0;
    height: 20px;
    padding-bottom: 1px;
    text-align: center;
    border: 1px solid #272727;
    border-bottom: 0;
    background: ${p => p.$full ? '#5680c2' : '#3f3f3f'};
    color: #d0d0d0;
`

const LockButton = styled.button`
    display: grid;
    place-items: center;
`

const Dot = styled.span`
    flex: none;
    justify-self: center;
    width: 4px;
    height: 4px;
    border-radius: 50%;
    background: #f4f4f4;
`

const ModeRow = styled.div`
    display: flex;
    align-items: center;
    height: 20px;
    margin-top: 5px;
    padding: 0 16px 0 8px;
`

/* ---------- view menu ---------- */

const Menu = styled.div`
    position: absolute;
    z-index: 10;
    top: 19px;
    left: 1px;
    width: 230px;
    padding: 3px 0;
    border-radius: 0 4px 4px 4px;
    background: rgba(26, 26, 26, 0.96);
    box-shadow: 0 2px 6px rgba(0, 0, 0, 0.6);
`

const MenuRow = styled.label`
    display: flex;
    align-items: center;
    height: 20px;
    margin: 0 4px 0 2px;
    padding: 0 10px 0 7px;
    border-radius: 4px;
    background: ${p => p.$hot ? '#6c8ec6' : 'none'};
    color: ${p => p.$off ? '#5e5e5e' : '#d8d8d8'};
    white-space: nowrap;
`

const MenuIcon = styled.span`
    display: grid;
    place-items: center;
    width: 16px;
    margin-right: 6px;
`

const Shortcut = styled.span`
    margin-left: auto;
    color: ${p => p.$hot ? '#b4c4e0' : p.$off ? '#484848' : '#808080'};
`

const SubArrow = styled(Triangle)`
    margin: 0 -7px 0 auto;
    border-width: 3px 0 3px 6px;
    border-left-color: #999;
`

const MenuLine = styled.hr`
    height: 1px;
    margin: 3px 7px;
    border: 0;
    background: #3a3a3a;
`

const Check = styled.input`
    appearance: none;
    display: grid;
    place-items: center;
    flex: none;
    width: 13px;
    height: 13px;
    border-radius: 3px;
    background: ${p => p.$muted ? '#7d7d7d' : '#dcdcdc'};
    outline: 1px solid #333;

    &:checked {
        background: #fff;
    }
    &:checked::before {
        content: '';
        width: 4px;
        height: 8px;
        margin-bottom: 2px;
        border: solid #1b1b1b;
        border-width: 0 2px 2px 0;
        transform: rotate(42deg);
    }
`

const Tooltip = styled.div`
    position: absolute;
    top: 34px;
    left: 22px;
    width: 469px;
    height: 62px;
    padding: 7px 11px 7px 12px;
    border-radius: 4px;
    background: rgba(25, 25, 25, 0.94);
    box-shadow: 0 1px 4px rgba(0, 0, 0, 0.7);
    color: #e0e0e0;
    line-height: 17px;
    white-space: nowrap;

    pre {
        margin: 2px 0 0;
        font: 12px/13px "DejaVu Sans Mono", monospace;
        color: #707070;
    }
`

const menuItems = [
    { text: '工具栏', check: true, keys: 'T', hot: true },
    { text: '侧栏', check: true, keys: 'Ctrl T' },
    { text: '工具设置', check: true },
    { text: '资产架', check: false },
    { text: '调整上一步操作', check: true },
    { text: 'Tool Shelf Tabs', check: true },
    null,
    { text: 'Legacy', mark: 0, sub: true },
    null,
    { text: 'Annotations (Legacy)', mark: 0, sub: true },
    null,
    { text: 'OpenGL Render Image', mark: 0, icon: 'shot' },
    { text: 'OpenGL Render Animation', mark: 7, icon: 'clapper' },
    { text: '视图渲染关键帧', icon: 'clapper' },
    null,
    { text: 'Clipping Border', mark: 0, icon: 'clipping' },
    null,
    { text: '摄像机', sub: true },
    null,
    { text: '对齐视图', sub: true },
    { text: '视图对齐活动项', sub: true },
    null,
    { text: '切换局部视图', icon: 'local', keys: '数字键盘 /' },
    { text: '从局部视图中移除', icon: 'localOff', keys: 'Ctrl 数字键盘 /', off: true },
    null,
    { text: '框显所选', icon: 'frameSel', keys: 'F' },
    { text: '框显全部', icon: 'frameAll', keys: 'Home' },
    { text: '游标居中并查看全部', icon: 'frameCur', keys: 'Shift C' },
    null,
    { text: '切换四格视图', icon: 'quad', keys: 'Ctrl Alt Q' },
    null,
    { text: '区域', sub: true },
    { text: 'Pie menus', mark: 0, sub: true },
    { text: 'Reset 3D View', mark: 7, icon: 'reset', keys: '数字键盘 *' },
]

const Marked = ({ text, mark }) => {
    if (mark === undefined) return <span>{text}</span>
    return <span>{text.slice(0, mark)}<u>{text[mark]}</u>{text.slice(mark + 1)}</span>
}

const ViewMenu = () => (
    <Menu role="menu">
        {menuItems.map((item, i) => {
            if (!item) return <MenuLine key={i} />
            const isCheck = item.check !== undefined
            return (
                <MenuRow key={i} as={isCheck ? 'label' : 'div'} role={isCheck ? undefined : 'menuitem'} $hot={item.hot} $off={item.off}>
                    <MenuIcon>
                        {isCheck && <Check type="checkbox" defaultChecked={item.check} />}
                        {item.icon && <Icon name={item.icon} />}
                    </MenuIcon>
                    <Marked text={item.text} mark={item.mark} />
                    {item.keys && <Shortcut $hot={item.hot} $off={item.off}>{item.keys}</Shortcut>}
                    {item.sub && <SubArrow $closed />}
                </MenuRow>
            )
        })}
        <Tooltip role="tooltip">
            工具栏
            <pre>{'Python: SpaceView3D.show_region_toolbar\nbpy.data.screens["Main"].areas[3].spaces[0].show_region_toolbar'}</pre>
        </Tooltip>
    </Menu>
)

/* ---------- 3D scene ---------- */

// ground plane (x, y) in metres to view coordinates
const depth = (x, y) => 1 - 0.05503 * x + 0.0237 * y
const project = (x, y) => {
    const w = depth(x, y)
    return [380 + (189.4 + 10.83 * x + 51.9 * y) / w, 200 + (254.3 + 6.756 * x - 4.026 * y) / w]
}

const segment = (a, b) => {
    const [x1, y1] = project(...a)
    const [x2, y2] = project(...b)
    return `M${x1.toFixed(1)} ${y1.toFixed(1)}L${x2.toFixed(1)} ${y2.toFixed(1)}`
}

const alongY = (x) => segment([x, Math.max(-200, (0.08 - 1 + 0.05503 * x) / 0.0237)], [x, 400])
const alongX = (y) => segment([-400, y], [(1 + 0.0237 * y - 0.08) / 0.05503, y])

const minor = []
const major = []
for (let i = -70; i <= 70; i++) {
    if (i === 0) continue
    const list = i % 10 === 0 ? major : minor
    if (i < 19) list.push(alongY(i))
    if (i > -30) list.push(alongX(i))
}

const Scene = () => (
    <SceneLayer viewBox="8 114 1122 707" preserveAspectRatio="xMidYMid slice" aria-hidden="true">
        <defs>
            <linearGradient id="sky" x1="0" y1="0" x2="0" y2="1">
                <stop offset="0" stopColor="#626262" />
                <stop offset=".5" stopColor="#505050" />
                <stop offset="1" stopColor="#404040" />
            </linearGradient>
            <linearGradient id="fade" gradientUnits="userSpaceOnUse" x1="0" y1="114" x2="0" y2="480">
                <stop offset="0" stopColor="#8a8a8a" stopOpacity=".1" />
                <stop offset=".4" stopColor="#8a8a8a" stopOpacity=".45" />
                <stop offset="1" stopColor="#8a8a8a" stopOpacity=".85" />
            </linearGradient>
            <linearGradient id="fadeMajor" gradientUnits="userSpaceOnUse" x1="0" y1="114" x2="0" y2="480">
                <stop offset="0" stopColor="#909090" stopOpacity=".4" />
                <stop offset="1" stopColor="#909090" stopOpacity=".95" />
            </linearGradient>
        </defs>
        <rect x="8" y="114" width="1122" height="707" fill="url(#sky)" />
        <path d={minor.join('')} stroke="url(#fade)" strokeWidth="1.300" />
        <path d={major.join('')} stroke="url(#fadeMajor)" strokeWidth="1.300" />
        <path d={alongX(0)} stroke="#bb4f5c" strokeWidth="1.700" />
        <path d={alongY(0)} stroke="#3cb43c" strokeWidth="1.700" />
        <circle cx="569" cy="454" r="10" fill="none" stroke="#fff" strokeWidth="1.200" />
        <circle cx="569" cy="454" r="10" fill="none" stroke="#f01818" strokeWidth="1.200" strokeDasharray="5 3" />
        <path d="M569 436v12M569 460v12M551 458l10-2M577 452l11-2M560 445l5 5M572 457l5 5" stroke="#fff" strokeWidth="1.200" />
    </SceneLayer>
)

const GizmoDrawing = styled.svg`
    margin-top: 9px;
`

const AxisGizmo = () => (
    <GizmoDrawing width="84" height="80" viewBox="819 146 84 80">
        <path d="M861 188V160" stroke="#1c7bcc" strokeWidth="2" />
        <path d="M861 188l28-5" stroke="#2acb2a" strokeWidth="2" />
        <path d="M861 188l13 13" stroke="#f03550" strokeWidth="2" />
        <circle cx="848" cy="175" r="7" fill="rgba(190,60,80,.2)" stroke="#a94452" strokeWidth="1.300" />
        <circle cx="861" cy="216" r="7" fill="rgba(30,110,180,.3)" stroke="#2a6ea8" strokeWidth="1.300" />
        <circle cx="832" cy="194" r="7.500" fill="rgba(60,170,60,.7)" stroke="#28e028" strokeWidth="1.300" />
        <circle cx="860" cy="159" r="8.300" fill="#1c7bcc" />
        <circle cx="890" cy="182" r="8.300" fill="#2acb2a" />
        <circle cx="874" cy="201" r="8.300" fill="#ff3352" />
        <g fontSize="11" fontWeight="700" textAnchor="middle" fill="#101010">
            <text x="860" y="163">Z</text>
            <text x="890" y="186">Y</text>
            <text x="874" y="205">X</text>
        </g>
    </GizmoDrawing>
)

const VectorFields = ({ title, values, top }) => (
    <>
        <GroupTitle $top={top}>{title}</GroupTitle>
        <div>
            {values.map((value, i) => {
                const id = title + i
                return (
                    <FieldRow key={id} $cols="35px 109px 20px 20px">
                        <FieldName htmlFor={id} $right>{'XYZ'[i]}</FieldName>
                        <Field id={id} defaultValue={value} />
                        <LockButton aria-label="Lock"><Icon name="lock" size={14} /></LockButton>
                        <Dot />
                    </FieldRow>
                )
            })}
        </div>
    </>
)

const ViewHeader = styled(Bar)`
    position: relative;
    z-index: 5;
`

const View3D = () => (
    <Area>
        <ViewHeader $bg="#424242" $h={27} $pad="0 8px 3px">
            <Gap $w={2} />
            <Select label="Mode" icon="objectMode" value="物体模式" w={86} pad={4} />
            <HeaderMenus>
                <HeaderMenu>Quick</HeaderMenu>
                <MenuAnchor>
                    <HeaderMenu $active>视图</HeaderMenu>
                    <ViewMenu />
                </MenuAnchor>
                {['视图切换', '选择', '添加', '物体'].map((name) => <HeaderMenu key={name}>{name}</HeaderMenu>)}
            </HeaderMenus>
            <Gap $push />
            <Select label="Orientation" icon="axes" value="全局" w={61} pad={3} />
            <Group><Tool icon="pivot" tone="blue" w={32} chevron label="Pivot" /></Group>
            <Group><Tool icon="magnet" /><Tool icon="snap" tone="blue" w={32} chevron label="Snapping" /></Group>
            <Group><Tool icon="prop" /></Group>
            <Gap $w={55} />
            <Group><Tool icon="selectable" tone="blue" w={32} chevron label="Selectability" /></Group>
            <Group><Tool icon="gizmo" tone="active" /><Drop /></Group>
            <Group><Tool icon="overlay" tone="active" /><Drop /></Group>
            <Group><Tool icon="xray" /></Group>
            <Group $tight>
                <Tool icon="wire" />
                <Tool icon="solid" tone="active" />
                <Tool icon="material" />
                <Tool icon="rendered" />
                <Drop />
            </Group>
            <Tools icons={['house1', 'house2', 'house3', 'house4', 'house5', 'house6']} />
            <Gap $w={1} />
            <Group><Drop /></Group>
        </ViewHeader>
        <Viewport>
            <Scene />
            <ToolHeader>
                <ToolSettings>
                    Drag Action:
                    <Select label="Drag Action" value="移动" w={200} pad={7} />
                    <Gap $w={23} />
                    <Select label="Active Tool" value="活动工具" w={116} pad={54} />
                </ToolSettings>
                <ToolSettings>
                    <Select label="Options" value="选项" w={45} pad={7} />
                </ToolSettings>
            </ToolHeader>
            <ViewBody>
                <SideTabs>
                    <SideTab $flip $active>工具</SideTab>
                    <SideTab $flip>物体</SideTab>
                    <SideTab $flip>实用工具</SideTab>
                </SideTabs>
                <ToolShelf>
                    <PanelHeader><Triangle />工具<Grip /></PanelHeader>
                    {[['select', 'cursor'], ['move', 'rotate', 'scale', 'transform'], ['annotate', 'measure'], ['addCube']].map((names, i) => (
                        <ShelfGroup key={i} $cols={Math.min(2, names.length)} $first={i === 0}>
                            {names.map((name) => (
                                <ShelfButton key={name} $active={name === 'transform'} aria-label={name}>
                                    <svg width="38" height="33" viewBox="0 0 38 33">
                                        {toolGlyphs[name]}
                                        {['select', 'scale', 'annotate', 'addCube'].includes(name) && <path d="M36 27v4h-4z" fill="#fff" />}
                                    </svg>
                                </ShelfButton>
                            ))}
                        </ShelfGroup>
                    ))}
                </ToolShelf>
                <ViewInfo>用户透视<br />(1) 场景集合</ViewInfo>
                <NavButtons>
                    {['persp', 'navCam', 'hand', 'navZoom'].map((name) => (
                        <NavButton key={name} aria-label={name}><Icon name={name} /></NavButton>
                    ))}
                </NavButtons>
                <AxisGizmo />
                <NPanel>
                    <PanelHeader><Triangle />变换<Grip /></PanelHeader>
                    <VectorFields title="位置" values={['4.0762 m', '1.0055 m', '5.9039 m']} top={8} />
                    <VectorFields title="旋转" values={['37.261°', '3.1637°', '106.94°']} />
                    <ModeRow>
                        模式
                        <Gap $push />
                        <Select label="模式" value="XYZ 欧拉" w={69} pad={6} />
                        <Gap $w={28} />
                        <Dot />
                    </ModeRow>
                    <VectorFields title="缩放" values={['1.000', '1.000', '1.000']} />
                </NPanel>
                <SideTabs $right>
                    <SideTab $active>条目</SideTab>
                    <SideTab>工具</SideTab>
                    <SideTab>视图</SideTab>
                </SideTabs>
            </ViewBody>
        </Viewport>
    </Area>
)

/* ---------- timeline ---------- */

const FrameField = styled.label`
    display: flex;
    align-items: center;
    justify-content: space-between;
    width: ${p => p.$w}px;
    height: 19px;
    padding: 0 13px 0 15px;
    background: #3a3a3a;

    input {
        width: 100%;
        min-width: 0;
        text-align: ${p => p.$center ? 'center' : 'right'};
    }
    span {
        flex: none;
    }
`

const KeySet = styled.input`
    width: 110px;
    height: 19px;

    &::placeholder {
        color: #7c7c7c;
    }
`

const KeySetBox = styled.div`
    display: flex;
    align-items: center;
    gap: 6px;
    width: 138px;
    padding-left: 3px;
    background: #545454;
`

const Timeline = () => (
    <Area $h={24} $bg="#303030">
        <Bar $h={24} $pad="1px 8px 0">
            <ToolButton $tone="flat" aria-label="Timeline"><Icon name="menu" /></ToolButton>
            <Tools push icons={['first', 'rewind', 'back', 'play', 'forward', 'last', 'loop']} />
            <Group>
                <FrameField $w={73} $center><input aria-label="Frame" defaultValue="1" /></FrameField>
            </Group>
            <Group>
                <Tool icon="clock" />
                <Tool icon="marker" />
                <FrameField $w={86}><span>起始</span><input defaultValue="1" /></FrameField>
                <FrameField $w={86}><span>结束</span><input defaultValue="250" /></FrameField>
                <Tool icon="marker" />
            </Group>
            <Tools icons={['keyAdd', 'keyDel']} />
            <Gap $w={28} />
            <Group>
                <Tool icon="record" />
                <KeySetBox><Icon name="keys" /><KeySet aria-label="Keying set" placeholder="插帧集" /></KeySetBox>
                <Tool tone="blue" w={46} gap={4} chevron>回放</Tool>
                <Tool tone="blue" w={46} gap={4} chevron>抠像</Tool>
                <Drop />
            </Group>
        </Bar>
    </Area>
)

/* ---------- outliner ---------- */

const TreeRow = styled.div`
    display: flex;
    align-items: center;
    gap: 4px;
    height: 20px;
    padding: 0 14px 0 ${p => p.$indent}px;
    color: ${p => p.$dim ? '#888' : '#d8d8d8'};
    background: ${p => p.$odd ? '#464646' : '#424242'};

    > ${Triangle} {
        margin-right: 2px;
    }
`

const TreeIcon = styled.span`
    display: grid;
    place-items: center;
    width: 20px;
    height: 18px;
    border-radius: 4px;
    background: ${p => p.$boxed ? '#636363' : 'none'};
    outline: ${p => p.$boxed ? '1px solid #7a7a7a' : 'none'};
    outline-offset: -1px;
`

const TreeToggles = styled.span`
    display: flex;
    align-items: center;
    gap: 4px;
    margin-left: auto;
`

const ScrollH = styled.div`
    width: 199px;
    height: 3px;
    margin: auto 0 2px 8px;
    border-radius: 2px;
    background: #5a5a5a;
`

const Outliner = () => {
    const [visible, setVisible] = useState(true)
    return (
        <Area $h={183}>
            <Bar $h={27} $pad="0 8px 3px 9px">
                <Group><Tool icon="toggles" /></Group>
                <Group><Tool icon="picture" tone="blue" w={31} chevron label="Display mode" /></Group>
                <HeaderMenus>
                    <HeaderMenu>视图</HeaderMenu>
                    <HeaderMenu>颜色</HeaderMenu>
                </HeaderMenus>
                <Group><Tool icon="newColl" /></Group>
                <Gap $w={4} />
                <Group><Tool icon="search" /></Group>
                <Group><Tool icon="filter" tone="blue" w={32} chevron label="Filter" /></Group>
            </Bar>
            <TreeRow $indent={20}>
                <TreeIcon $boxed><Icon name="coll" /></TreeIcon>
                场景集合
            </TreeRow>
            <TreeRow $indent={26} $odd>
                <Triangle $color="#b4f07c" />
                <TreeIcon><Icon name="coll" size={14} /></TreeIcon>
                Collection
                <TreeToggles>
                    <Check type="checkbox" aria-label="Collection" checked={visible} onChange={() => setVisible(!visible)} />
                    <Gap />
                    <Icon name="pointer" /><Icon name="eye" /><Icon name="render" />
                </TreeToggles>
            </TreeRow>
            <TreeRow $indent={46} $dim>
                <Triangle $closed $color="#888" />
                <TreeIcon><Icon name="camObj" /></TreeIcon>
                Camera
                <TreeToggles><Icon name="pointer" /><Icon name="eyeOff" /><Icon name="render" /></TreeToggles>
            </TreeRow>
            <TreeRow $indent={46} $dim $odd>
                <Triangle $closed $color="#888" />
                <TreeIcon $boxed><Icon name="light" /></TreeIcon>
                Light
                <Gap $w={14} />
                <svg width="9" height="14" viewBox="0 0 9 14">
                    <path d="M8 1.500a5.500 5.500 0 000 11" fill="none" stroke="#8c8a20" strokeWidth="1.400" />
                    <path d="M9 5a2.200 2.200 0 000 4.400z" fill="#b0ac20" stroke="#b0ac20" />
                </svg>
                <TreeToggles><Icon name="pointer" /><Icon name="eyeOff" /><Icon name="render" /></TreeToggles>
            </TreeRow>
            <ScrollH />
        </Area>
    )
}

/* ---------- properties ---------- */

const PropsBody = styled.div`
    display: flex;
    flex: 1;
    min-height: 0;
    background: #222;
`

const PropTabs = styled.div`
    display: flex;
    flex-direction: column;
    width: 28px;
    padding: 8px 0 0 1px;
`

const PropTab = styled.button`
    display: grid;
    place-items: center;
    flex: none;
    height: 28px;
    margin-top: ${p => p.$space ? 8 : 0}px;
    border: 1px solid #050505;
    border-right: 0;
    border-radius: 5px 0 0 5px;
    background: ${p => p.$active ? '#4b6998' : '#2e2e2e'};
`

const PropContent = styled.div`
    flex: 1;
    min-width: 0;
    padding: 0 1px 0 4px;
    overflow: hidden;
    background: #424242;
`

const ScrollV = styled.div`
    width: 3px;
    height: 391px;
    margin-right: 2px;
    border-radius: 2px;
    background: #595959;
`

const SceneRow = styled.div`
    display: flex;
    align-items: center;
    gap: 8px;
    height: 36px;
    padding: 0 4px 0 6px;
    color: #d8d8d8;

    button {
        margin-left: auto;
    }
`

const SelectRow = styled.div`
    display: flex;
    align-items: center;
    justify-content: space-between;
    height: 20px;
    margin: ${p => p.$m || '0'};
`

const Panel = styled.section`
    margin-bottom: 2px;
    border-radius: 4px;
    background: #474747;
    padding-bottom: ${p => p.$pb || 0}px;
`

const CheckLabel = styled.label`
    display: flex;
    align-items: center;
    gap: 4px;
`

const SubPanel = styled.div`
    display: flex;
    align-items: center;
    gap: 3px;
    height: 20px;
    margin: 11px 0 0 26px;
`

const PathRow = styled.div`
    display: flex;
    gap: 1px;
    height: 19px;
    margin: 8px 8px 6px;
    border-radius: 4px;
    outline: 1px solid #272727;
    background: #272727;
    overflow: hidden;

    input {
        flex: 1;
        min-width: 0;
        padding-left: 7px;
        background: #545454;
    }
`

const SearchBox = styled.label`
    display: flex;
    align-items: center;
    gap: 5px;
    width: 117px;
    height: 19px;
    margin: 0 auto 0 20px;
    padding-left: 3px;
    border-radius: 4px;
    outline: 1px solid #292929;
    background: #545454;

    input {
        width: 80px;
    }
    input::placeholder {
        color: #808080;
    }
`

const PropFields = ({ title, fields, top }) => (
    <>
        <GroupTitle $top={top}>{title}</GroupTitle>
        <div>
            {fields.map(([name, value]) => (
                <FieldRow key={name} $cols="1fr 96px 7px">
                    <FieldName htmlFor={title + name}>{name}</FieldName>
                    <Field id={title + name} defaultValue={value} $full={value === '100%'} />
                </FieldRow>
            ))}
        </div>
    </>
)

const Properties = () => (
    <Area $bg="#222">
        <Bar $h={25} $pad="0 8px 0 9px">
            <Group><Tool icon="tree" /></Group>
            <SearchBox><Icon name="search" /><input aria-label="搜索" placeholder="搜索" /></SearchBox>
            <Group><Drop /></Group>
        </Bar>
        <PropsBody>
            <PropTabs>
                {['render', 'printer', 'picture', 'scene', 'world', 'objectMode', 'physics', 'link', 'bulb'].map((name) => (
                    <PropTab key={name} $active={name === 'printer'} $space={name === 'objectMode'} aria-label={name}>
                        <Icon name={name} />
                    </PropTab>
                ))}
            </PropTabs>
            <PropContent>
                <SceneRow><Icon name="scene" />Scene<button aria-label="Pin"><Icon name="pin" /></button></SceneRow>
                <SelectRow $m="8px 3px 10px 4px">渲染引擎<Select label="渲染引擎" value="EEVEE" w={110} pad={8} /></SelectRow>
                <Panel $pb={8}>
                    <PanelHeader><Triangle />格式<Gap $push /><Icon name="list" /><Gap $w={1} /><div><Grip /></div></PanelHeader>
                    <PropFields title="分辨率" top={8} fields={[['X', '1920 px'], ['Y', '1080 px'], ['Percent %', '100%']]} />
                    <PropFields title="宽高比" fields={[['X', '1.000'], ['Y', '1.000']]} />
                    <SelectRow $m="5px 99px 0 8px">
                        <CheckLabel><Check type="checkbox" $muted />区域渲染</CheckLabel>
                        <Triangle $closed />
                    </SelectRow>
                    <SelectRow $m="5px 7px 0 8px">帧率<Select label="帧率" value="24 fps" w={104} pad={8} /></SelectRow>
                </Panel>
                <Panel $pb={2}>
                    <PanelHeader><Triangle />帧范围<Grip /></PanelHeader>
                    <PropFields title="帧" top={8} fields={[['起始', '1'], ['结束', '250'], ['步长', '1']]} />
                    <SubPanel><Triangle $closed />时间拉伸</SubPanel>
                </Panel>
                <Panel>
                    <PanelHeader><Triangle $closed /><CheckLabel><Check type="checkbox" $muted />立体视法</CheckLabel><Grip /></PanelHeader>
                </Panel>
                <Panel>
                    <PanelHeader><Triangle />输出<Grip /></PanelHeader>
                    <PathRow><input aria-label="Output path" defaultValue="/tmp\" /><Tool icon="folder" /></PathRow>
                    <SelectRow $m="0 7px 0 8px">文件格式<Select label="文件格式" icon="picture" value="PNG" w={104} /></SelectRow>
                </Panel>
            </PropContent>
            <ScrollV />
        </PropsBody>
    </Area>
)

const StatusBar = styled.footer`
    display: flex;
    align-items: center;
    gap: 7px;
    flex: none;
    height: 21px;
    padding: 0 11px 0 10px;
    background: #303030;
    color: #b0b0b0;
`

const KeyCap = styled.span`
    width: 32px;
    height: 15px;
    margin-right: -20px;
    border: 1px solid #b0b0b0;
    border-radius: 3px;
    font-size: 8px;
    line-height: 14px;
    text-align: center;
    overflow: hidden;
    white-space: nowrap;
`

const Version = styled.span`
    padding-left: 4px;
    border-left: 1px solid #909090;
`

const App = function () {
    return (
        <Desktop>
            <GlobalStyle />
            <Stage>
                <EdgeLeft aria-hidden="true">
                    <EdgeLine $gap={6}>表</EdgeLine>
                    <EdgeLine $gap={130} $bg="#5cb176" />
                    <EdgeLine $gap={46}>码</EdgeLine>
                    {[5, 14, 15].map((gap) => <EdgeLine key={gap} $gap={gap}>s</EdgeLine>)}
                    <EdgeLine $gap={18} $bold>r</EdgeLine>
                    {[...'部用用只状色示二工十能一顶集'].map((char, i) => <EdgeLine key={i}>{char}</EdgeLine>)}
                </EdgeLeft>
                <Window>
                    <TitleBar>
                        <Icon name="logo" />
                        (未保存) - Bforartists 4.2.2
                        <WindowButtons>
                            <button aria-label="Minimize"><svg width="11" height="11"><path d="M0 5.500h11" stroke="#000" /></svg></button>
                            <button aria-label="Maximize"><svg width="11" height="11"><path d="M.5.5h10v10H.5z" fill="none" stroke="#000" /></svg></button>
                            <button aria-label="Close"><svg width="11" height="11"><path d="M.5.5l10 10M10.500.5l-10 10" stroke="#000" /></svg></button>
                        </WindowButtons>
                    </TitleBar>
                    <MenuBar>
                        {['文件', '编辑', '渲染', '窗口', '帮助'].map((name) => <MenuBarItem key={name}>{name}</MenuBarItem>)}
                        <WorkTabs>
                            {['Main', 'Assets', 'UV编辑', '着色', '动画', 'Nodes', '脚本'].map((name) => (
                                <WorkTab key={name} $active={name === 'Main'}>{name}</WorkTab>
                            ))}
                            <WorkTab aria-label="Add workspace"><svg width="10" height="10"><path d="M5 0v10M0 5h10" stroke="#fff" strokeWidth="2" /></svg></WorkTab>
                        </WorkTabs>
                    </MenuBar>
                    <Bar $h={28} $pad="1px 9px 0">
                        <Group><Drop /></Group>
                        <Group><Drop /></Group>
                        <Group><Tool icon="newFile" /><Tool icon="doc" tone="flat" /></Group>
                        <Group><Tool icon="folder" /><Tool icon="recent" tone="flat" /></Group>
                        <Tools icons={['disk', 'diskIn', 'diskCopy']} />
                        <Tools flat icons={['importIcon']} />
                        <Tools flat icons={['exportIcon']} />
                        <Tools icons={['shot', 'clapper']} />
                        <Group><Drop /></Group>
                        <Group><Drop /></Group>
                        <Tools icons={['plane', 'cube', 'circle', 'sphere', 'ico', 'cylinder', 'cone', 'torus', 'grid']} />
                        <Tools icons={['empty', 'curve', 'monkey']} />
                        <Tools icons={['fontF', 'armature', 'lattice', 'movie', 'speaker']} />
                        <Group><Drop /></Group>
                        <Group><Drop /></Group>
                        <Tools icons={['applyMove', 'applyRot', 'applyScale', 'applyAll', 'applyDelta']} />
                        <Group $push><Drop /></Group>
                        <Tools icons={['undo', 'redo']} tone="dim" />
                        <Tools icons={['history']} />
                        <Tools icons={['repeat', 'repeatHist']} tone="dim" />
                        <Group><Tool icon="gear" tone="dim" w={66} gap={5}>结束点</Tool></Group>
                        <Tools icons={['searchDoc', 'search']} />
                    </Bar>
                    <Editors>
                        <Column>
                            <View3D />
                            <Timeline />
                        </Column>
                        <Column $w={235}>
                            <Outliner />
                            <Properties />
                        </Column>
                    </Editors>
                    <StatusBar>
                        <KeyCap>间隔性编</KeyCap>
                        搜索
                        <Gap $push />
                        <Icon name="globe" />
                        <Version>4.2.2</Version>
                    </StatusBar>
                </Window>
                <EdgeRight />
            </Stage>
            <Taskbar />
        </Desktop>
    )
}

export default App
